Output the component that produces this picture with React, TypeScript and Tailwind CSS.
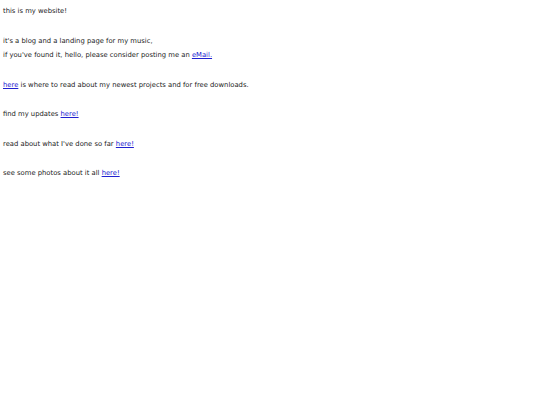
export default function App() {
  const a = "text-[#2020d0] underline";
  return (
    <div className="min-h-[405px] bg-white px-[3px] pt-[4px] text-[6.8px] leading-[14.75px] text-[#222]" style={{ fontFamily: '"DejaVu Sans", Verdana, sans-serif' }}>
      <div>this is my website!</div>
      <div>&nbsp;</div>
      <div>it's a blog and a landing page for my music,</div>
      <div>if you've found it, hello, please consider posting me an <a className={a} href="#">eMail.</a></div>
      <div>&nbsp;</div>
      <div><a className={a} href="#">here</a> is where to read about my newest projects and for free downloads.</div>
      <div>&nbsp;</div>
      <div>find my updates <a className={a} href="#">here!</a></div>
      <div>&nbsp;</div>
      <div>read about what I've done so far <a className={a} href="#">here!</a></div>
      <div>&nbsp;</div>
      <div>see some photos about it all <a className={a} href="#">here!</a></div>
    </div>
  );
}
